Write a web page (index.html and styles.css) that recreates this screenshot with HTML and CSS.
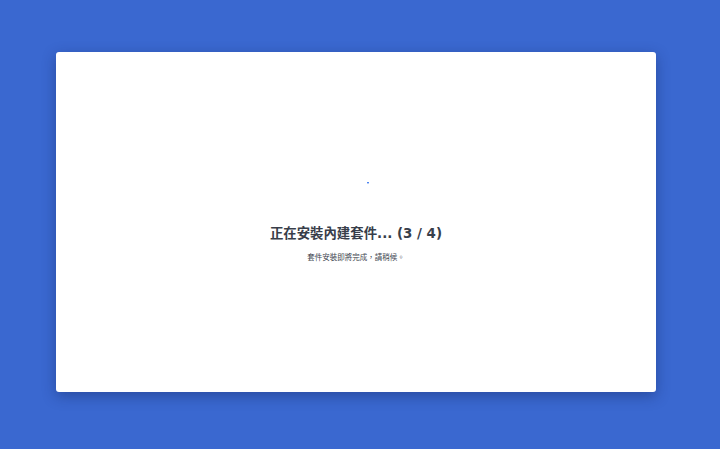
FILE: index.html
```html
<!DOCTYPE html>
<html lang="zh-Hant-TW">
<head>
<meta charset="utf-8">
<title>安裝中</title>
<link rel="stylesheet" href="styles.css">
</head>
<body>
<main class="page">
  <section class="card">
    <div class="loader">
      <svg class="spinner" width="24" height="24" viewBox="0 0 24 24" aria-hidden="true">
        <rect x="23" y="1" width="2" height="1.4" fill="#4f86f0"/>
      </svg>
      <h1 class="title">正在安裝內建套件... (3 / 4)</h1>
      <p class="subtitle">套件安裝即將完成，請稍候。</p>
    </div>
  </section>
</main>
</body>
</html>
```
FILE: styles.css
```css
html, body {
  margin: 0;
  padding: 0;
  height: 100%;
}
body {
  background: #3a68d0;
  font-family: "DejaVu Sans", "Noto Sans CJK TC", sans-serif;
}
.page {
  box-sizing: border-box;
  height: 100%;
  padding: 52px 0 0 56px;
  display: flex;
  align-items: flex-start;
}
.card {
  width: 600px;
  height: 340px;
  background: #ffffff;
  border-radius: 3px;
  box-shadow: 0 4px 14px rgba(20, 40, 100, 0.45);
  display: flex;
  align-items: center;
  justify-content: center;
}
.loader {
  display: flex;
  flex-direction: column;
  align-items: center;
}
.spinner {
  display: block;
  overflow: visible;
}
.title {
  margin: 20px 0 0;
  font-size: 13.4px;
  line-height: 18px;
  font-weight: bold;
  color: #383e4a;
}
.subtitle {
  margin: 8px 0 0;
  font-family: "Noto Sans CJK TC", "Noto Sans CJK SC", sans-serif;
  font-feature-settings: "locl" 1;
  -webkit-locale: "zh-TW";
  font-size: 7.5px;
  line-height: 12px;
  color: #41464f;
}
```
